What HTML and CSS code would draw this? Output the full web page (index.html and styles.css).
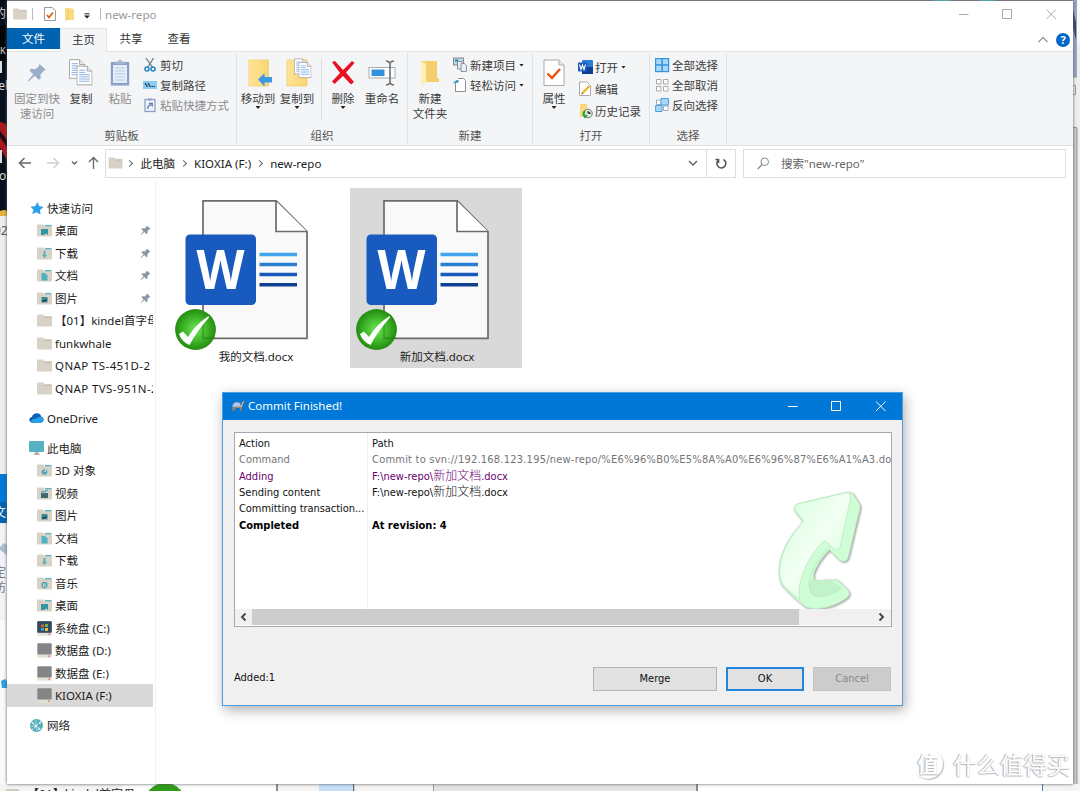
FILE: index.html
```html
<!DOCTYPE html>
<html lang="zh-CN">
<head>
<meta charset="utf-8">
<title>new-repo</title>
<link rel="stylesheet" href="styles.css">
</head>
<body>
<svg class="defs" width="0" height="0">
  <defs>
    <radialGradient id="okfill" cx=".5" cy=".5" r=".55"><stop offset="0" stop-color="#6ee756"/><stop offset=".5" stop-color="#42b82c"/><stop offset="1" stop-color="#1c8208"/></radialGradient>
    <linearGradient id="fold" x1="0" x2="1"><stop offset="0" stop-color="#ffe596"/><stop offset="1" stop-color="#f8d573"/></linearGradient>
    <linearGradient id="ribbonfill" x1="0" y1="0" x2="1" y2="1"><stop offset="0" stop-color="#d6ffdc"/><stop offset=".5" stop-color="#f2fff3"/><stop offset="1" stop-color="#d0fcd6"/></linearGradient>
    <symbol id="folder" viewBox="0 0 15 13"><path d="M0 1.5Q0 .5 1 .5H6L7.500 2H14Q15 2 15 3V11.500Q15 12.500 14 12.500H1Q0 12.500 0 11.500Z" fill="#d8d1c6"/><path d="M7 3.500H14.500" stroke="#c5bdb2"/></symbol>
    <symbol id="tfolder" viewBox="0 0 15 13"><path d="M0 1.500Q0 .5 1 .5H6L7.500 2H14Q15 2 15 3V11.500Q15 12.500 14 12.500H1Q0 12.500 0 11.500Z" fill="#d8d1c6"/><path d="M8 1.600H14.500" stroke="#5cb6c5" stroke-width="1.400"/></symbol>
    <symbol id="pin" viewBox="0 0 20 20"><path d="M12.500 1L19 7L16.800 7.700L13.500 11.500L13.700 15.500L11.800 16.700L7.800 12.700L1.500 18.500L.8 18L6.300 11.300L2.500 7.500L3.800 5.800L8.300 6.200L11.800 3.200Z" fill="currentColor"/></symbol>
    <symbol id="page" viewBox="0 0 18 22"><path d="M1 .5H12L17.500 6V21.500H.5V.5Z" fill="#fff" stroke="#9a9a9a"/><path d="M12 .5V6H17.500" fill="#eee" stroke="#9a9a9a"/><path d="M3 5H10M3 7.500H10M3 10H15M3 12.500H15M3 15H15M3 17.500H15" stroke="#7ea8e0"/></symbol>
    <symbol id="drive" viewBox="0 0 15 15"><rect x=".3" y=".3" width="14.400" height="11.400" rx="1" fill="#858585"/><rect x=".3" y="11.700" width="14.400" height="3" fill="#e4e0d2"/><rect x="11.500" y="12.500" width="1.300" height="1.300" fill="#e44"/></symbol>
    <symbol id="worddoc" viewBox="0 0 172 164">
      <path d="M34 12.800H107.300L138 43.500V150.300H34Z" fill="#f9f9f9" stroke="#6d6c69" stroke-width="1.700"/>
      <path d="M107 13V43.500H138" fill="#fff" stroke="#6d6c69" stroke-width="1.700"/>
      <rect x="16.500" y="46.500" width="70.500" height="70.500" rx="4.500" fill="#185abd"/>
      <path d="M90.500 66.500H128" stroke="#41a5ee" stroke-width="3.600"/><path d="M90.500 76.500H128" stroke="#2b7cd3" stroke-width="3.600"/><path d="M90.500 86.500H128" stroke="#185abd" stroke-width="3.600"/><path d="M90.500 96.700H128" stroke="#103f91" stroke-width="3.600"/>
      <text x="27.500" y="100.500" textLength="48" lengthAdjust="spacingAndGlyphs" class="wletter">W</text>
      <circle cx="26.500" cy="141.500" r="20.400" fill="url(#okfill)"/>
      <path d="M34 132V150.300H46" stroke="#17700a" stroke-width="1.500" fill="none" opacity=".45"/>
      <path d="M10 146L14 143.500L19 149Q26 137 39.500 128L40 129.500Q28 143 20.500 157Q13 154 10 146Z" fill="#fff"/>
    </symbol>
  </defs>
</svg>

<div class="desktop">
  <svg class="backdrop" width="1080" height="791">
    <rect width="1080" height="791" fill="#eee"/>
    <rect width="1080" height="1" fill="#8f8a9c"/>
    <rect width="7" height="216" fill="#07111d"/>
    <path d="M0 26H7V62H0Z" fill="#030507"/>
    <path d="M0 122Q5 122 7 126V160L0 148Z" fill="#a51920"/><path d="M0 131L7 140V147L0 137Z" fill="#160b10"/>
    <path d="M0 211Q5 209 7 211V216H0Z" fill="#e4b13e"/>
    <g class="bgtext" fill="#dcdcdc"><text x="-6" y="18">的</text><text x="0" y="54" font-size="9">K</text><text x="-6" y="90">tel</text><text x="-1" y="180">o</text><text x="-6" y="235" fill="#555">02</text></g>
    <rect y="150" width="2" height="13" fill="#ddd"/><rect y="61" width="2" height="12" fill="#ddd"/>
    <rect y="474" width="7" height="49" fill="#0078d7"/><rect y="502" width="7" height="21" fill="#0063b1"/>
    <rect y="525" width="7" height="94" fill="#f1f3f6"/><rect y="620" width="7" height="171" fill="#fafafa"/>
    <path d="M0 547L4 543L7 545V555L0 550Z" fill="#aebdd3"/><path d="M1 681L5 679L7 681V688L2 688Z" fill="#2ba0e8"/>
    <g class="bgtext" fill="#777"><text x="-6" y="517" fill="#fff">文件</text><text x="-6" y="577">定</text><text x="-6" y="592">访</text></g>
    <rect x="1073" width="7" height="791" fill="#eee"/>
    <rect x="1073" width="4" height="77" fill="#9ba5c4"/><path d="M1073 10L1076 22V40L1073 28Z" fill="#35456f"/><rect x="1077" width="3" height="43" fill="#f8f8f8"/>
    <path d="M1073 77H1077M1073 127.500H1077M1073 85.500H1075.500V94.500H1073" fill="none" stroke="#999"/>
    <rect x="1073" y="128" width="4" height="663" fill="#c9c9c9"/><path d="M1077 128V791" stroke="#999"/>
    <rect y="784" width="1080" height="7" fill="#f4f4f4"/>
    <rect x="123" y="784" width="155" height="7" fill="#fff"/>
    <g class="bgtext" fill="#222"><text x="27" y="799">【01】kindel首字母</text></g>
    <circle cx="165" cy="804" r="21" fill="#2e9b19"/>
    <path d="M277 784V791M353.500 784V791M697 784V791" stroke="#666" stroke-width="1.500"/><rect x="319" y="784" width="34" height="7" fill="#c4e1f9"/>
    <rect x="434" y="784" width="262" height="7" fill="#e4e4e4"/><path d="M433.500 784V791" stroke="#999"/>
    <rect x="698" y="784" width="344" height="7" fill="#fff"/><path d="M1042.500 784V791" stroke="#2b87d1"/>
    <rect x="6" y="789" width="13" height="2" fill="#d1cbc0"/>
    <path d="M933 .5H950M980 .5H995" stroke="#58d2cb"/>
  </svg>

  <main class="explorer">
    <header class="titlebar">
      <div class="quick">
        <svg width="14" height="12"><use href="#folder"/></svg><i class="bar"></i>
        <svg class="q-check" width="12" height="14" viewBox="0 0 12 14"><path d="M.5 .5H8L11.500 3.500V13.500H.5Z" fill="#fff" stroke="#999"/><path d="M3 8L5 10.500L9 5.500" fill="none" stroke="#e8590c" stroke-width="1.700"/></svg>
        <svg class="q-fold" width="9" height="13" viewBox="0 0 9 13"><path d="M0 0H4L9 1V12H3L0 13Z" fill="#fadc83"/><path d="M3 2V12" stroke="#edc35c"/></svg>
        <svg class="q-more" width="6" height="6" viewBox="0 0 6 6"><path d="M.5 .8H5.500" stroke="#222"/><path d="M0 2.500H6L3 5.500Z" fill="#222"/></svg>
        <i class="bar second"></i><span class="wtitle">new-repo</span>
      </div>
      <div class="wbtns">
        <svg width="100" height="12" viewBox="0 0 100 12" fill="none" stroke="#aaa"><path d="M0 6.500H9.500M43.500 1.500H52.500V10.500H43.500ZM87.500 1.500L97 11M97 1.500L87.500 11"/></svg>
      </div>
    </header>
    <nav class="tabs">
      <span class="tab file">文件</span><span class="tab home">主页</span><span class="tab share">共享</span><span class="tab">查看</span>
      <div class="tabend"><svg width="10" height="7" viewBox="0 0 10 7"><path d="M.5 6L5 1.500L9.500 6" fill="none" stroke="#999" stroke-width="1.300"/></svg><b class="help">?</b></div>
    </nav>
    <section class="ribbon">
      <div class="group g1">
        <div class="tools">
          <div class="big off w50"><svg class="ico i-pin" width="20" height="20"><use href="#pin"/></svg>固定到快<br>速访问</div>
          <div class="big w36 ml1"><svg class="ico" width="24" height="28" viewBox="0 0 24 28"><use href="#page" width="16" height="20"/><use href="#page" x="7.500" y="6" width="16" height="21"/></svg>复制</div>
          <div class="big off w40 ml1"><svg class="ico" width="20" height="28" viewBox="0 0 20 28"><rect x=".8" y="3" width="18.400" height="23.500" fill="#8aa0c8"/><rect x="3" y="6" width="14" height="18" fill="#e4eefb"/><path d="M5 9H15M5 12H15M5 15H15M5 18H15M5 21H15" stroke="#bccbe2"/><path d="M5 5V2.500H8Q10-1.500 12 2.500H15V5Z" fill="#a9b6cc"/></svg>粘贴</div>
          <div class="smalls ml3">
            <div class="small"><svg width="16" height="16" viewBox="0 0 16 16"><path d="M3 1L10 11M10.500 1L4.500 11" stroke="#6d7a86" stroke-width="1.300"/><circle cx="4" cy="12" r="2" fill="none" stroke="#2688c7" stroke-width="1.600"/><circle cx="10" cy="12" r="2" fill="none" stroke="#2688c7" stroke-width="1.600"/></svg>剪切</div>
            <div class="small"><svg width="16" height="16" viewBox="0 0 16 16"><rect x="0" y="4" width="14" height="8" fill="#8ecbf3"/><path d="M2 6L4.500 10M5 6L7.500 10M8.500 9.500H10M10.500 9.500H12" stroke="#163b55" stroke-width="1.200"/></svg>复制路径</div>
            <div class="small off"><svg width="16" height="16" viewBox="0 0 16 16"><rect x="2" y="2.500" width="10" height="12" fill="#eef3fb" stroke="#8da2c5" stroke-width="1.300"/><path d="M5 1.500H9V3.500H5Z" fill="#8da2c5"/><path d="M5 12V9.500L8 7.500M6 6.500H9.200V9.800" stroke="#5b79ac" stroke-width="1.300" fill="none"/></svg>粘贴快捷方式</div>
          </div>
        </div><div class="caption">剪贴板</div>
      </div>
      <div class="group g2">
        <div class="tools">
          <div class="big w38"><svg class="ico" width="26" height="28" viewBox="0 0 26 28"><rect x="4" y="1" width="19.500" height="26" fill="url(#fold)" stroke="#efca6a" stroke-width=".7"/><path d="M13 20.500L19.500 14V18H27V23.500H19.500V27.500Z" fill="#3b99e4"/></svg>移动到<i class="drop"></i></div>
          <div class="big w38 ml1"><svg class="ico" width="27" height="28" viewBox="0 0 27 28"><rect x="3" y="1" width="20" height="26" fill="url(#fold)" stroke="#efca6a" stroke-width=".7"/><use href="#page" x="10" y="-1" width="13" height="17"/><use href="#page" x="14.500" y="2" width="13" height="18"/></svg>复制到<i class="drop"></i></div>
          <i class="split"></i>
          <div class="big w38"><svg class="ico" width="24" height="28" viewBox="0 0 24 28"><path d="M1 3L4 2L12 11L21 2L23.500 4L15 13.500L23 23L20 25.500L12 17L3.500 25L1 22.500L9 14Z" fill="#e81123"/></svg>删除<i class="drop"></i></div>
          <div class="big w38 ml1"><svg class="ico" width="28" height="28" viewBox="0 0 28 28"><rect x="1" y="8.500" width="26" height="10.500" fill="#fff" stroke="#aaa"/><rect x="3.500" y="10.500" width="13" height="6.500" fill="#3091df"/><path d="M18 2Q20.500 2 22 4Q23.500 2 26 2M22 4V24M18 26Q20.500 26 22 24Q23.500 26 26 26" fill="none" stroke="#707070" stroke-width="1.600"/></svg>重命名</div>
        </div><div class="caption">组织</div>
      </div>
      <div class="group g3">
        <div class="tools">
          <div class="big w40"><svg class="ico" width="20" height="28" viewBox="0 0 20 28"><path d="M1 2H17V19H19V23H17H6L2 26L1 25Z" fill="#f5cf6c"/><path d="M1 2L6 5V24L2 26L1 25Z" fill="#fff0ba"/></svg>新建<br>文件夹</div>
          <div class="smalls ml3">
            <div class="small"><svg width="16" height="16" viewBox="0 0 16 16"><rect x=".5" y="1" width="10" height="7" fill="#b7d9e9" stroke="#888"/><rect x="2" y="2.500" width="3" height="2" fill="#2980b9"/><path d="M4.500 4.500H9L11 6.500V12H4.500Z" fill="#eee" stroke="#888"/><path d="M8 6.500H11.500L13.500 8.500V14.500H8Z" fill="#e6eef8" stroke="#8a95a5"/></svg>新建项目<i class="drop inline"></i></div>
            <div class="small"><svg width="16" height="16" viewBox="0 0 16 16"><path d="M3 3.500H4M5 1.500H10.500L12.500 3.500V14.500H2.500V6" fill="#fff" stroke="#8f8f8f"/><path d="M0 7Q1 3 6 3L5 6Q2 5 0 7" fill="#4599cf"/></svg>轻松访问<i class="drop inline"></i></div>
          </div>
        </div><div class="caption">新建</div>
      </div>
      <div class="group g4">
        <div class="tools">
          <div class="big w36"><svg class="ico" width="22" height="28" viewBox="0 0 22 28"><path d="M1 1H16L21 6V26.500H1Z" fill="#fff" stroke="#aaa"/><path d="M16 1V6H21" fill="#eee" stroke="#aaa"/><path d="M4.500 14.500L9 19L17 10" fill="none" stroke="#e8520c" stroke-width="2.400"/></svg>属性<i class="drop"></i></div>
          <div class="smalls wide">
            <div class="small"><svg width="16" height="16" viewBox="0 0 16 16"><rect x="4" y="1" width="11" height="14" rx="1" fill="#2b7cd3"/><path d="M4 8H15V15H4Z" fill="#103f91"/><rect y="3.500" width="9" height="9" rx=".7" fill="#185abd"/><path d="M1.500 5.500L3 10.500L4.500 6L6 10.500L7.500 5.500" stroke="#fff" fill="none" stroke-width="1.100"/></svg>打开<i class="drop inline"></i></div>
            <div class="small"><svg width="16" height="16" viewBox="0 0 16 16"><path d="M1.500 1H9L12.500 4.500V14.500H1.500Z" fill="#fff" stroke="#aaa"/><path d="M4 12.500L11.500 5" stroke="#f0ae1b" stroke-width="2"/><path d="M3.500 13L5 12.500" stroke="#555"/></svg>编辑</div>
            <div class="small"><svg width="16" height="16" viewBox="0 0 16 16"><path d="M2 1H9V13H5L2 15Z" fill="#f8d878"/><circle cx="10" cy="10.500" r="4.300" fill="#dfe7df" stroke="#777"/><path d="M10 8V10.500H13" stroke="#555"/><path d="M7 8Q4 11 7 14L9 12" stroke="#24a338" stroke-width="2" fill="none"/></svg>历史记录</div>
          </div>
        </div><div class="caption">打开</div>
      </div>
      <div class="group g5">
        <div class="tools">
          <div class="smalls">
            <div class="small"><svg width="16" height="16" viewBox="0 0 16 16"><rect x=".6" y="1.600" width="13" height="13" fill="#a7d8fa" stroke="#3393dc" stroke-width="1.200"/><path d="M7.100 2V14M1 8.100H13.500" stroke="#3393dc" stroke-width="1.500"/></svg>全部选择</div>
            <div class="small"><svg width="16" height="16" viewBox="0 0 16 16" fill="#fff" stroke="#aaa"><path d="M1.500 2.500H6V7H1.500ZM8.500 2.500H13V7H8.500ZM1.500 9.500H6V14H1.500ZM8.500 9.500H13V14H8.500Z"/></svg>全部取消</div>
            <div class="small"><svg width="16" height="16" viewBox="0 0 16 16"><path d="M1.500 3H6V7.500H1.500ZM8.500 9H13V13.500H8.500Z" fill="#fff" stroke="#aaa"/><path d="M6 1.500H13.500V8H6ZM.6 8.500H7V14.500H.6Z" fill="#a7d8fa" stroke="#4ba2e3"/></svg>反向选择</div>
          </div>
        </div><div class="caption">选择</div>
      </div>
    </section>
    <section class="address">
      <svg class="arrows" width="98" height="20" viewBox="7 0 98 20" fill="none" stroke="#666" stroke-width="1.500"><path d="M19.500 10H31M24.500 5L19.500 10L24.500 15"/><path d="M47 10H58.500M53.500 5L58.500 10L53.500 15" stroke="#d0d0d0"/><path d="M72 8.500L74.500 11L77 8.500"/><path d="M93.500 16V4.500M89 9L93.500 4.500L98 9" stroke-width="1.300"/></svg>
      <div class="path"><svg width="15" height="12"><use href="#folder"/></svg><i class="chev c1"></i><span>此电脑</span><i class="chev"></i><span class="kx">KIOXIA (F:)</span><i class="chev"></i><span>new-repo</span>
        <svg class="pdown" width="10" height="7" viewBox="0 0 10 7"><path d="M1 1L5 5L9 1" fill="none" stroke="#666" stroke-width="1.500"/></svg></div>
      <div class="refresh"><svg width="13" height="13" viewBox="0 0 13 13"><path d="M8.500 2.500A4.500 4.500 0 1 1 3.500 3M3.500 6V2.500H.5" fill="none" stroke="#555" stroke-width="1.600"/></svg></div>
      <div class="search"><svg width="13" height="13" viewBox="0 0 13 13"><circle cx="7.700" cy="4.800" r="3.800" fill="none" stroke="#888"/><path d="M5 7.500L.8 12" stroke="#888" stroke-width="1.200"/></svg><span>搜索"new-repo"</span></div>
    </section>
    <div class="content">
      <aside class="side">
        <div class="row root"><svg width="15" height="15" viewBox="0 0 15 15"><path d="M8.500 1L10 5L14.500 6L11 9L11.500 13.500L7.500 11.200L3 13L4.500 9L1.500 5.500L6 5.200Z" fill="#2ca0eb"/></svg>快速访问</div>
        <div class="row"><svg width="15" height="13"><use href="#tfolder"/><path d="M4 5H11V11L9 9.500L7 11L4 11Z" fill="#3394a4"/></svg>桌面<svg class="pinned" width="11" height="11" viewBox="0 0 20 20"><use href="#pin"/></svg></div>
        <div class="row"><svg width="15" height="13"><use href="#tfolder"/><path d="M6.500 4H8.500V8H10L7.500 11L5 8H6.500Z" fill="#4db3c1"/></svg>下载<svg class="pinned" width="11" height="11" viewBox="0 0 20 20"><use href="#pin"/></svg></div>
        <div class="row"><svg width="15" height="13"><use href="#tfolder"/><path d="M4.500 4H8L10.500 6.500V11.500H4.500Z" fill="#4db3c1"/></svg>文档<svg class="pinned" width="11" height="11" viewBox="0 0 20 20"><use href="#pin"/></svg></div>
        <div class="row"><svg width="15" height="13"><use href="#tfolder"/><path d="M4.500 5H10.500V10.500H4.500Z" fill="#3b8797"/><path d="M5 10L7 8L8.500 9L10 7.500" stroke="#0e353b"/></svg>图片<svg class="pinned" width="11" height="11" viewBox="0 0 20 20"><use href="#pin"/></svg></div>
        <div class="row"><svg width="15" height="13"><use href="#folder"/></svg>【01】kindel首字母</div>
        <div class="row"><svg width="15" height="13"><use href="#folder"/></svg>funkwhale</div>
        <div class="row"><svg width="15" height="13"><use href="#folder"/></svg><span class="qn">QNAP TS-451D-2</span></div>
        <div class="row"><svg width="15" height="13"><use href="#folder"/></svg><span class="qn">QNAP TVS-951N-2</span></div>
        <div class="row root gap"><svg width="15" height="12" viewBox="0 0 16 12"><path d="M3 11Q-.5 10 .5 7Q1 5 3 5Q4.500 1 8.500 1Q12 1 13 4.500Q16 5 15.500 8.500Q15 11 12 11Z" fill="#0b62b8"/><path d="M1.500 10Q4 6 8 6.500Q10 4 13 5Q16 6 15.500 9Q15 11 12 11H3Z" fill="#28a0e7"/></svg>OneDrive</div>
        <div class="row root gap"><svg width="15" height="15" viewBox="0 0 15 15"><rect width="15" height="11" rx="1" fill="#57b1c2"/><path d="M6.500 11H9L11 14H4.500Z" fill="#b6b1a6"/></svg>此电脑</div>
        <div class="row"><svg width="15" height="13"><use href="#tfolder"/><circle cx="7.500" cy="8" r="2.800" fill="#4ba9b7"/><path d="M7.500 8L9 6" stroke="#fff"/></svg>3D 对象</div>
        <div class="row"><svg width="15" height="13"><use href="#tfolder"/><path d="M4 6H11V11H4Z" fill="#42666d"/><path d="M4 5L11 3.500M6 5V7M8.500 5V7" stroke="#43a4b4"/></svg>视频</div>
        <div class="row"><svg width="15" height="13"><use href="#tfolder"/><path d="M4.500 5H10.500V10.500H4.500Z" fill="#3b8797"/><path d="M5 10L7 8L8.500 9L10 7.500" stroke="#0e353b"/></svg>图片</div>
        <div class="row"><svg width="15" height="13"><use href="#tfolder"/><path d="M4.500 4H8L10.500 6.500V11.500H4.500Z" fill="#4db3c1"/></svg>文档</div>
        <div class="row"><svg width="15" height="13"><use href="#tfolder"/><path d="M6.500 4H8.500V8H10L7.500 11L5 8H6.500Z" fill="#4db3c1"/></svg>下载</div>
        <div class="row"><svg width="15" height="13"><use href="#tfolder"/><circle cx="7.500" cy="8" r="2.500" fill="none" stroke="#4ba9b7" stroke-width="1.300"/><path d="M7 9L9 6.500" stroke="#4ba9b7"/></svg>音乐</div>
        <div class="row"><svg width="15" height="13"><use href="#tfolder"/><path d="M4 5H11V11L9 9.500L7 11L4 11Z" fill="#3394a4"/></svg>桌面</div>
        <div class="row"><svg width="15" height="15"><use href="#drive"/><rect x=".3" y=".3" width="14.400" height="11.400" rx="1" fill="#304b62"/><path d="M4 3.500H7V6H4Z" fill="#e95a38"/><path d="M8 3H11V6H8Z" fill="#68b447"/><path d="M4 7H7V9.500H4Z" fill="#3ba9e2"/><path d="M8 7H11V10H8Z" fill="#f1bc35"/></svg>系统盘 (C:)</div>
        <div class="row"><svg width="15" height="15"><use href="#drive"/></svg>数据盘 (D:)</div>
        <div class="row"><svg width="15" height="15"><use href="#drive"/></svg>数据盘 (E:)</div>
        <div class="row selected"><svg width="15" height="15"><use href="#drive"/></svg>KIOXIA (F:)</div>
        <div class="row root gap"><svg width="15" height="15" viewBox="0 0 15 15"><circle cx="7.500" cy="7.500" r="6.500" fill="#54adbc"/><path d="M2 4L7 8L12 3M7 8L3 12M7 8L12 11M2 8L7 8L8 13M7 8L7 2" stroke="#d9eff0" fill="none" stroke-width=".7"/><g fill="#e6f4ee"><circle cx="7" cy="8" r="1.300"/><circle cx="4" cy="5" r="1"/><circle cx="11" cy="5" r="1"/><circle cx="10" cy="11" r="1"/></g></svg>网络</div>
      </aside>
      <section class="files">
        <div class="tile"><svg width="172" height="164"><use href="#worddoc"/></svg><span>我的文档.docx</span></div>
        <div class="tile active"><svg width="172" height="164"><use href="#worddoc"/></svg><span>新加文档.docx</span></div>
      </section>
    </div>
  </main>

  <section class="dialog">
    <header class="dtitle">
      <svg width="14" height="12" viewBox="0 0 14 12"><path d="M1 7Q2 2 6 2Q10 2 10.500 7Z" fill="#afc8ec" stroke="#637da8" stroke-width=".6"/><path d="M9.500 6L11 2.500Q13-.5 13.500 2L12 4L11 8" fill="#d7cdbb" stroke="#444" stroke-width=".5"/><path d="M1.500 7L1 10.500H4L4.500 8H8.500L9 10.500H11.500L10 7Z" fill="#9c806c"/></svg>
      <span>Commit Finished!</span>
      <svg class="dbtns" width="100" height="12" viewBox="0 0 100 12" fill="none" stroke="#fff"><path d="M0 6.500H9.500M43.500 1.500H52.500V10.500H43.500ZM88 1.500L97.500 11M97.500 1.500L88 11"/></svg>
    </header>
    <div class="dbody">
      <div class="list">
        <div class="lrows">
          <div class="lr"><span>Action</span><span>Path</span></div>
          <div class="lr grey"><span>Command</span><span class="cmd">Commit to svn://192.168.123.195/new-repo/%E6%96%B0%E5%8A%A0%E6%96%87%E6%A1%A3.docx</span></div>
          <div class="lr purple"><span>Adding</span><span>F:\new-repo\<em>新加文档</em>.docx</span></div>
          <div class="lr"><span>Sending content</span><span>F:\new-repo\<em>新加文档</em>.docx</span></div>
          <div class="lr"><span class="ct">Committing transaction...</span><span></span></div>
          <div class="lr strong"><span>Completed</span><span>At revision: 4</span></div>
        </div>
        <svg class="commit-arrow" width="94" height="124" viewBox="100 310 282 372">
          <g filter="drop-shadow(3px 3px 3px #9a9a9a)" stroke-linejoin="round">
            <path d="M323 323Q333 321 339 327L359 358Q363 365 360 374L325 519Q321 531 309 530L300 526L270 495Q238 525 222 565Q219 585 228 588L274 586Q287 582 295 588L326 618Q331 625 326 636Q289 665 242 671Q211 674 196 665Q160 639 130 605Q115 586 119 541Q127 479 191 409Q179 397 164 376Q162 360 177 357Z" fill="#cffdd5" stroke="#bdebc3" stroke-width="3"/>
            <path d="M177 357L320 324Q334 323 333 342L301 489Q294 500 283 493L254 467Q210 511 188 571Q173 614 181 644Q144 616 130 600Q117 581 121 541Q130 480 191 409L166 374Q164 361 177 357Z" fill="url(#ribbonfill)" stroke="#c0eec7" stroke-width="3"/>
            <path d="M222 570Q219 585 228 588L274 586L306 610Q272 635 232 636Q208 631 208 600Z" fill="#c2f2c9"/>
            <path d="M270 485Q213 546 208 592Q208 631 232 636Q272 635 306 610" fill="none" stroke="#b9edc1" stroke-width="3"/>
          </g>
        </svg>
        <div class="scroll"><svg width="17" height="16" viewBox="0 0 17 16"><path d="M10.500 4.500L7 8L10.500 11.500" fill="none" stroke="#444" stroke-width="1.900"/></svg><i class="thumb"></i><svg class="sright" width="17" height="16" viewBox="0 0 17 16"><path d="M6.500 4.500L10 8L6.500 11.500" fill="none" stroke="#444" stroke-width="1.900"/></svg></div>
      </div>
      <footer class="dfoot"><span class="added">Added:1</span><button class="merge">Merge</button><button class="ok">OK</button><button class="cancel" disabled>Cancel</button></footer>
    </div>
  </section>

  <div class="watermark"><b>值</b><span>什么值得买</span></div>
</div>
</body>
</html>
```
FILE: styles.css
```css
* { box-sizing: border-box; }
body { margin: 0; font: 11.5px/15px "Noto Sans", "Noto Sans CJK SC", sans-serif; color: #1c1c1c; }
svg { flex: none; display: block; }
i { font-style: normal; }
.defs { position: absolute; }
.desktop { position: relative; width: 1080px; height: 791px; overflow: hidden; }
.backdrop { position: absolute; }
.bgtext { font-size: 12px; }
.explorer { position: absolute; left: 7px; top: 1px; width: 1066px; height: 783px; background: #fff; display: flex; flex-direction: column; box-shadow: 0 0 3px #555; }
.titlebar { height: 27px; display: flex; justify-content: space-between; color: #999; }
.quick { display: flex; align-items: center; padding: 0 0 1px 6px; }
.bar { width: 1px; height: 12px; background: #bbb; margin-left: 5px; }
.q-check { margin-left: 11px; }
.q-fold { margin-left: 9px; }
.q-more { margin-left: 10px; margin-top: 4px; }
.bar.second { margin-left: 10px; }
.wtitle { margin-left: 4px; font-size: 11.6px; }
.wbtns { padding: 7px 14px 0 0; }
.tabs { height: 24px; display: flex; border-bottom: 1px solid #e3e4e6; color: #333; }
.tab { width: 48px; height: 23px; text-align: center; line-height: 22px; }
.tab.file { width: 53px; height: 21px; background: #0063b1; color: #fff; }
.tab.home { width: 47px; height: 24px; background: #f4f5f7; border: 1px solid #e3e4e6; border-bottom: 0; line-height: 21px; }
.tabend { margin-left: auto; display: flex; align-items: center; gap: 8px; padding-right: 3px; }
.help { width: 14px; height: 14px; border-radius: 50%; background: #0067c5; color: #fff; text-align: center; line-height: 14px; font-size: 11px; }
.ribbon { height: 94px; background: #f4f5f7; border-bottom: 1px solid #dfe0e2; display: flex; padding: 1px 0; color: #3c3c3c; }
.group { flex: none; border-right: 1px solid #e1e2e5; height: 91px; display: flex; flex-direction: column; justify-content: space-between; }
.g1 { width: 230px; } .g2 { width: 171px; } .g3 { width: 125px; } .g4 { width: 117px; } .g5 { width: 77px; }
.tools { display: flex; padding-top: 2px; }
.g1 .tools { padding-left: 5px; }
.g2 .tools, .g3 .tools { padding-left: 2px; }
.g4 .tools { padding-left: 3px; }
.g5 .tools { padding-left: 5px; }
.caption { text-align: center; line-height: 15px; color: #555; height: 16px; }
.big { flex: none; display: flex; flex-direction: column; align-items: center; text-align: center; white-space: nowrap; padding-top: 4px; line-height: 15px; }
.ico { margin-bottom: 4px; overflow: visible; }
.i-pin { margin: 4px 0 8px; color: #9aadca; }
.off { color: #8b8b8b; }
.w50 { width: 50px; } .w36 { width: 36px; } .w40 { width: 40px; } .w38 { width: 38px; }
.ml1 { margin-left: 1px; }
.ml3 { margin-left: 3px; }
.drop { width: 5px; height: 3px; background: #222; clip-path: polygon(0 0, 100% 0, 50% 100%); }
.drop.inline { margin-left: 2px; }
.split { width: 1px; height: 62px; margin: 4px 2px 0 5px; background: #dcdee1; }
.smalls { display: flex; flex-direction: column; }
.smalls.wide { margin-left: 6px; padding-top: 1px; }
.small { height: 20px; display: flex; align-items: center; gap: 1px; white-space: nowrap; }
.wide .small { height: 22px; }
.address { height: 35px; padding-top: 3px; display: flex; }
.arrows { margin-top: 4px; }
.path { width: 602px; height: 29px; border: 1px solid #dedede; display: flex; align-items: center; padding: 0 0 1px 2px; }
.chev { width: 5px; height: 5px; border: solid #666; border-width: 1.5px 1.5px 0 0; transform: rotate(45deg); margin: 0 8.5px 0 5.500px; }
.chev.c1 { margin-left: 4px; }
.kx { letter-spacing: .05px; }
.pdown { margin-left: auto; margin-right: 8px; }
.refresh { width: 29px; height: 29px; border: 1px solid #dedede; display: flex; border-left: 0; align-items: center; justify-content: center; }
.search { margin-left: 7px; width: 323px; height: 29px; border: 1px solid #dedede; display: flex; align-items: center; padding-left: 13px; gap: 11px; color: #666; }
.content { flex: 1; display: flex; min-height: 0; }
.side { width: 149px; flex: none; border-right: 1px solid #f1f1f1; padding-top: 15.75px; }
.row { height: 22.5px; width: 146px; display: flex; align-items: center; gap: 3px; padding-left: 30px; white-space: nowrap; overflow: hidden; }
.row.root { padding-left: 22px; }
.row.gap { margin-top: 7.5px; }
.qn { letter-spacing: .4px; }
.selected { background: #d9d9d9; }
.pinned { margin-left: auto; margin-right: 2px; color: #8a98a6; }
.files { flex: 1; padding: 7px 0 0 13px; display: flex; gap: 9px; align-items: flex-start; }
.tile { width: 172px; height: 180px; display: flex; flex-direction: column; align-items: center; }
.tile span { line-height: 16px; margin-top: -3px; padding-left: 2px; }
.active { background: #d9d9d9; }
.wletter { font: bold 53px "Open Sans", sans-serif; fill: #fff; }
.dialog { position: absolute; left: 222px; top: 392px; width: 681px; height: 314px; border: 1px solid #4a9ee0; background: #f0f0f0; display: flex; flex-direction: column; box-shadow: 2px 4px 12px rgba(0,0,0,.32); font: 11px/16px "DejaVu Sans Condensed", "DejaVu Sans", "Noto Sans CJK SC", sans-serif; font-stretch: condensed; color: #111; }
.dtitle { height: 27px; background: #0078d7; color: #fff; display: flex; align-items: center; padding: 0 0 1px 8px; gap: 3px; font-family: "Noto Sans", sans-serif; font-stretch: normal; font-size: 11.5px; }
.dbtns { margin-left: auto; margin-right: 14px; }
.dbody { padding: 12px 11px 0; }
.list { position: relative; width: 658px; height: 195px; border: 1px solid #a5a9b1; background: #fff; overflow: hidden; display: flex; flex-direction: column; }
.lrows { flex: 1; padding-top: 3px; background: linear-gradient(90deg, transparent 132px, #eaf1fa 132px, #eaf1fa 133px, transparent 133px); }
.lr { display: flex; height: 16.35px; line-height: 16px; white-space: nowrap; }
.lr span:first-child { width: 133px; padding-left: 4px; flex: none; }
.lr span:last-child { padding-left: 4px; }
.lr .cmd { letter-spacing: .22px; }
.lr .ct { letter-spacing: -.05px; }
.lr em { font-style: normal; font-family: "Noto Sans CJK SC", sans-serif; font-weight: 300; font-size: 12px; line-height: 12px; }
.grey { color: #757575; }
.purple { color: #6b0070; }
.strong { font-weight: bold; color: #000; }
.commit-arrow { position: absolute; left: 538px; top: 55px; }
.scroll { position: relative; height: 17px; background: #f0f0f0; display: flex; border-bottom: 1px solid #fff; }
.thumb { width: 547px; background: #cdcdcd; }
.sright { margin-left: auto; margin-right: 1px; }
.dfoot { margin-top: 40px; display: flex; width: 657px; align-items: center; }
.added { flex: 1; padding-bottom: 2px; }
.dfoot button { height: 24px; font: inherit; border: 1px solid #b4b4b4; background: #e1e1e1; color: #111; padding: 0 0 1px; }
.dfoot .merge { width: 124px; }
.dfoot .ok { width: 78px; border: 2px solid #2386dc; margin: 0 9px; }
.dfoot .cancel { width: 78px; background: #cccccc; border-color: #c4c4c4; color: #888; }
.watermark { position: absolute; left: 913px; top: 749px; display: flex; align-items: center; gap: 10px; color: #fff; font-family: "Noto Sans CJK SC", sans-serif; text-shadow: -1px 0 1px #aaa, 0 1px 1px #bbb; }
.watermark b { width: 30px; height: 30px; border-radius: 50%; text-align: center; font-size: 21px; line-height: 29px; box-shadow: 1px 1px 1px #bbb; }
.watermark span { font-size: 23.5px; line-height: 30px; }
```
